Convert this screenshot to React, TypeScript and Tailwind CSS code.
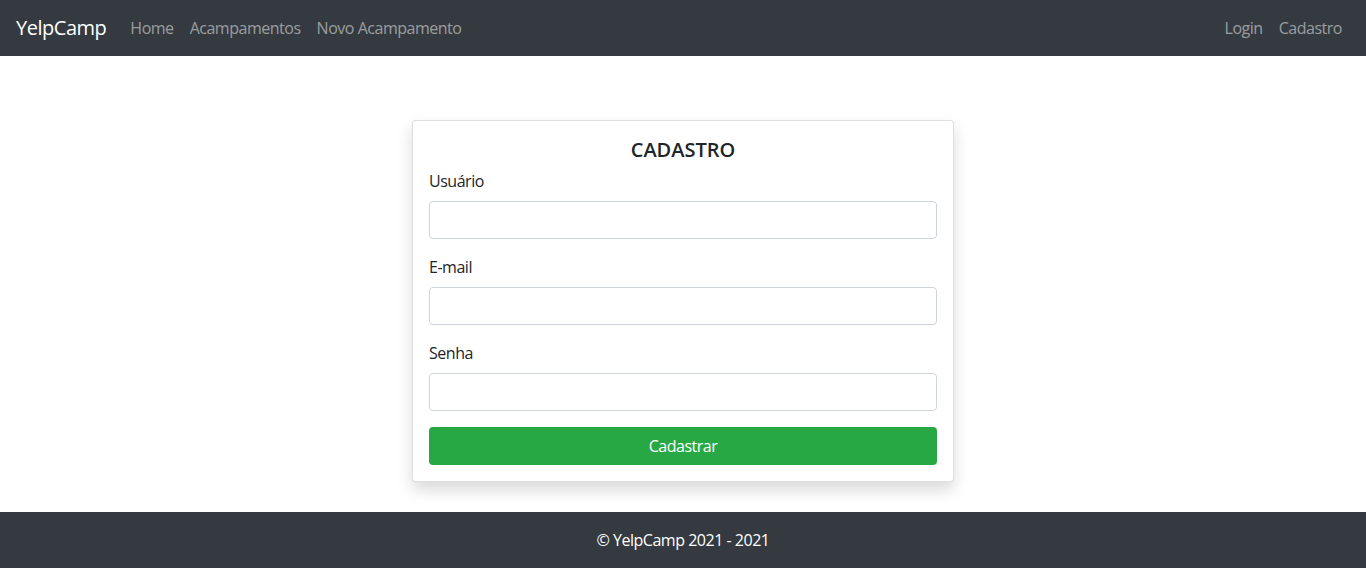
export default function App() {
  const fields = [
    { id: 'username', label: 'Usuário', type: 'text' },
    { id: 'email', label: 'E-mail', type: 'email' },
    { id: 'password', label: 'Senha', type: 'password' },
  ]

  return (
    <div className="flex min-h-screen flex-col bg-white font-['Segoe_UI','Open_Sans',sans-serif] tracking-[-0.03em] text-[#212529]">
      <nav className="flex h-14 items-center bg-[#343a40] px-4">
        <a href="#" className="mr-4 text-xl leading-[30px] text-white">YelpCamp</a>
        <div className="flex flex-1 items-center text-base text-white/50">
          <a href="#" className="px-2">Home</a>
          <a href="#" className="px-2">Acampamentos</a>
          <a href="#" className="px-2">Novo Acampamento</a>
        </div>
        <div className="flex items-center text-base text-white/50">
          <a href="#" className="px-2">Login</a>
          <a href="#" className="px-2">Cadastro</a>
        </div>
      </nav>

      <main className="flex flex-1 justify-center pt-16">
        <div className="h-fit w-[542px] rounded border border-black/[.125] bg-white shadow-[0_8px_16px_rgba(0,0,0,0.15)]">
          <div className="p-4">
            <h5 className="mb-2 pt-px pb-[-1px] text-center text-xl leading-[23px] font-semibold tracking-normal">CADASTRO</h5>
            <form>
              {fields.map((f) => (
                <div key={f.id} className="mb-4">
                  <label htmlFor={f.id} className="mb-2 block text-base leading-6">{f.label}</label>
                  <input
                    id={f.id}
                    type={f.type}
                    className="block h-[38px] w-full rounded border border-[#ced4da] px-3 text-base"
                  />
                </div>
              ))}
              <button
                type="button"
                className="block h-[38px] w-full rounded bg-[#28a745] text-base text-white"
              >
                Cadastrar
              </button>
            </form>
          </div>
        </div>
      </main>

      <footer className="mt-[30px] flex h-14 items-center justify-center bg-[#343a40] text-base text-white">
        © YelpCamp 2021 - 2021
      </footer>
    </div>
  )
}
